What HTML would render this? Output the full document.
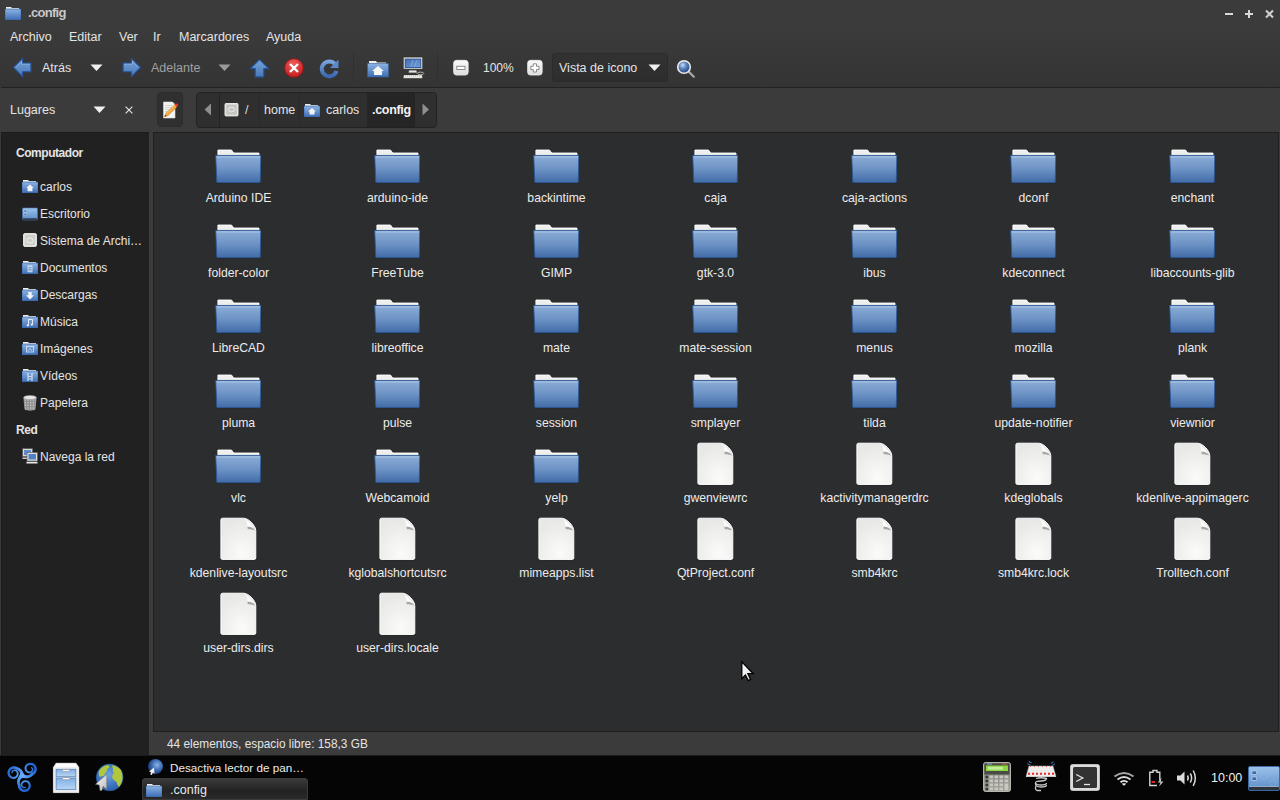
<!DOCTYPE html>
<html><head><meta charset="utf-8">
<style>
*{box-sizing:border-box}
html,body{margin:0;padding:0}
body{width:1280px;height:800px;overflow:hidden;position:relative;background:#3b3b3b;font-family:"Liberation Sans",sans-serif;font-size:12.5px;color:#e4e4e4}
.a{position:absolute;white-space:nowrap}
.t{position:absolute;white-space:nowrap;line-height:16px;margin-top:1px}
.ic{position:absolute;overflow:visible}
.lbl{position:absolute;width:160px;text-align:center;line-height:16px;color:#ececec;white-space:nowrap;font-size:12.2px}
#side{position:absolute;left:1px;top:132px;width:148px;height:623px;background:#212121;border-top:1px solid #1b1b1b;border-left:1px solid #1b1b1b}
#view{position:absolute;left:153px;top:132px;width:1126px;height:600px;background:#2c2d2f;border:1px solid #1f1f1f}
#task{position:absolute;left:0;top:755px;width:1280px;height:45px;background:#050505;border-top:1px solid #1d1d1d}
.hdr{font-weight:bold;letter-spacing:-0.45px;font-size:12px}
.sep{position:absolute;width:1px;background:#303030}
</style></head><body>
<svg width="0" height="0" style="position:absolute">
<defs>
<linearGradient id="fg" x1="0" y1="0" x2="0" y2="1">
<stop offset="0" stop-color="#8cadd7"/><stop offset="0.5" stop-color="#6d93c5"/><stop offset="1" stop-color="#426ca8"/>
</linearGradient>
<radialGradient id="pg" cx="0.6" cy="0.85" r="0.8">
<stop offset="0" stop-color="#fbfbfa"/><stop offset="1" stop-color="#e8e9e7"/>
</radialGradient>
<symbol id="fold" viewBox="0 0 50 40">
<path d="M6.9 5H20.5L22.75 8H48V11H6.9z" fill="none" stroke="#151515" stroke-opacity="0.55" stroke-width="1.6"/>
<path d="M6.9 5H20.5L22.75 8H48V11H6.9z" fill="#eeeeec" stroke="#ffffff" stroke-width="0.9"/>
<path d="M4.3 10.6H50.2L49.4 38.5H5.5z" fill="#161616" opacity="0.4"/>
<path d="M4.7 10.45H49.9L49.2 37.1Q49.2 37.6 48.7 37.6H6.3Q5.8 37.6 5.8 37.1Z" fill="url(#fg)" stroke="#2c5998" stroke-width="0.9"/>
<path d="M5.7 12H48.9" stroke="#c4d6ec" stroke-width="0.9" opacity="0.7"/>
</symbol>
<symbol id="file" viewBox="0 0 40 46">
<path d="M2.9 4.7Q2.9 3.2 4.4 3.2H25.7C30.5 3.2 37.8 10.5 37.8 15.7V43Q37.8 44.4 36.4 44.4H4.3Q2.9 44.4 2.9 43Z" fill="none" stroke="#151617" stroke-opacity="0.6" stroke-width="1.6"/>
<path d="M2.9 4.7Q2.9 3.2 4.4 3.2H25.7C30.5 3.2 37.8 10.5 37.8 15.7V43Q37.8 44.4 36.4 44.4H4.3Q2.9 44.4 2.9 43Z" fill="url(#pg)" stroke="#ffffff" stroke-width="1"/>
<path d="M29.3 11.6C33 11.6 35.5 13.2 37.3 15.6C35 14.6 32 14 29.8 14.2Z" fill="#8e8e8e" opacity="0.75"/>
<path d="M26 3.7C28.5 4.5 29.6 8 29.3 11.6C31.5 11.2 34 12 35.5 13C33 9 29.5 5 26 3.7Z" fill="#fdfdfd"/>
</symbol>
<linearGradient id="arr" x1="0" y1="0" x2="0" y2="1"><stop offset="0" stop-color="#78a3d8"/><stop offset="1" stop-color="#4677b8"/></linearGradient>
<linearGradient id="bl" x1="0" y1="0" x2="0" y2="1"><stop offset="0" stop-color="#8db3e2"/><stop offset="1" stop-color="#3d6eb5"/></linearGradient>
<symbol id="sfold" viewBox="0 0 16 14">
<path d="M1 1h5l1 1h7v3H1z" fill="#eee"/>
<path d="M0 3h16v11H0z" fill="url(#bl)" stroke="#34609e" stroke-width="0.6"/>
</symbol>
</defs></svg>

<div class="a" style="left:0;top:0;width:1280px;height:87px;background:linear-gradient(#3b3b3b 0px,#3b3b3b 28px,#343434 87px)"></div>
<!-- title bar -->
<svg class="ic" style="left:5px;top:6px" width="16" height="14"><use href="#sfold"/></svg>
<div class="t" style="left:28px;top:4px;color:#c8c8c8;font-size:13px;font-weight:bold;letter-spacing:-0.7px">.config</div>
<svg class="ic" style="left:1224px;top:10px" width="52" height="10">
<path d="M1 4h8" stroke="#d8d8d8" stroke-width="2"/>
<path d="M21 4h8M25 0v8" stroke="#d8d8d8" stroke-width="2"/>
<path d="M42 0.5l7 7M49 0.5l-7 7" stroke="#d0d0d0" stroke-width="2"/>
</svg>

<!-- menubar -->
<div class="t" style="left:10px;top:28px">Archivo</div>
<div class="t" style="left:69px;top:28px">Editar</div>
<div class="t" style="left:119px;top:28px">Ver</div>
<div class="t" style="left:153px;top:28px">Ir</div>
<div class="t" style="left:179px;top:28px">Marcardores</div>
<div class="t" style="left:266px;top:28px">Ayuda</div>

<!-- toolbar -->
<svg class="ic" style="left:13px;top:58px" width="20" height="20">
<path d="M0.6 9.5L9.6 0.6V5.1H17.9V13.8H9.6V18.6Z" fill="url(#arr)" stroke="#24549e" stroke-width="1.1" stroke-linejoin="miter"/><path d="M2.3 9.5L8.6 3.2V6.1H16.9" fill="none" stroke="#a8c6ec" stroke-width="0.7" opacity="0.7"/></svg>
<div class="t" style="left:42px;top:59px">Atrás</div>
<svg class="ic" style="left:90px;top:64px" width="14" height="8"><path d="M0.5 0.5h12l-6 6.5z" fill="#f0f0f0"/></svg>
<svg class="ic" style="left:121px;top:58px" width="20" height="20">
<path d="M19.4 9.5L10.4 0.6V5.1H2.1V13.8H10.4V18.6Z" fill="url(#arr)" stroke="#24549e" stroke-width="1.1" stroke-linejoin="miter"/><path d="M17.7 9.5L11.4 3.2V6.1H3.1" fill="none" stroke="#a8c6ec" stroke-width="0.7" opacity="0.7"/></svg>
<div class="t" style="left:151px;top:59px;color:#a0a0a0">Adelante</div>
<svg class="ic" style="left:218px;top:64px" width="14" height="8"><path d="M0.5 0.5h12l-6 6.5z" fill="#9a9a9a"/></svg>
<svg class="ic" style="left:250px;top:59px" width="20" height="19">
<path d="M9.5 0.6L18.6 9.6H13.8V17.9H5.2V9.6H0.4Z" fill="url(#arr)" stroke="#24549e" stroke-width="1.1" stroke-linejoin="miter"/></svg>
<svg class="ic" style="left:284px;top:58px" width="20" height="20">
<defs><radialGradient id="stp" cx="0.45" cy="0.3" r="0.75"><stop offset="0" stop-color="#f06060"/><stop offset="1" stop-color="#c01818"/></radialGradient></defs><circle cx="10" cy="10" r="9.3" fill="url(#stp)" stroke="#a81010" stroke-width="0.8"/>
<path d="M6 6l8 8M14 6l-8 8" stroke="#fff" stroke-width="2.3"/></svg>
<svg class="ic" style="left:319px;top:58px" width="21" height="21">
<defs><linearGradient id="rl" x1="0" y1="0" x2="0" y2="1"><stop offset="0" stop-color="#78a4dc"/><stop offset="1" stop-color="#3a68b2"/></linearGradient></defs><path d="M16 6A7.5 7.5 0 1 0 17.5 13" fill="none" stroke="url(#rl)" stroke-width="4"/>
<path d="M19.5 1.5v8.5h-8.5z" fill="#5a88c8"/></svg>
<div class="sep" style="left:353px;top:53px;height:29px"></div>
<svg class="ic" style="left:367px;top:59px" width="22" height="19">
<path d="M2 2h7l1 1.5h9v3H2z" fill="#eee"/>
<path d="M0.5 4.5h21v13.5H0.5z" fill="url(#bl)" stroke="#34609e" stroke-width="0.6"/>
<path d="M11 7l-6 5h2v4h8v-4h2z" fill="#f4f4f4"/></svg>
<svg class="ic" style="left:403px;top:56px" width="23" height="24">
<defs><linearGradient id="scr" x1="0" y1="0" x2="1" y2="1"><stop offset="0" stop-color="#3f6cb6"/><stop offset="1" stop-color="#73a0d6"/></linearGradient></defs>
<rect x="0.4" y="1.1" width="19.2" height="12" fill="#dcdcd4" stroke="#1e1e1e" stroke-opacity="0.5" stroke-width="0.8"/>
<rect x="2.2" y="3.1" width="15.6" height="8.5" fill="url(#scr)" stroke="#1f4a98" stroke-width="0.8"/>
<path d="M8 10.5L10 4M11.5 10.5L14 4" stroke="#a8c4e8" stroke-width="1" opacity="0.5"/>
<path d="M6 14.2H13.5L14 16.8H5.5Z" fill="#e4e4e0" stroke="#222" stroke-opacity="0.4" stroke-width="0.5"/>
<ellipse cx="17.5" cy="17.4" rx="3.3" ry="1.3" fill="none" stroke="#b8b8b0" stroke-width="1"/>
<path d="M0.8 19H19L19.5 22.2H0.4Z" fill="#f0f0ec" stroke="#222" stroke-opacity="0.4" stroke-width="0.5"/>
<path d="M2 20H18" stroke="#999" stroke-width="0.7" stroke-dasharray="1 1"/>
</svg>
<div class="sep" style="left:437px;top:53px;height:29px"></div>
<svg class="ic" style="left:453px;top:60px" width="16" height="16">
<defs><linearGradient id="zb" x1="0" y1="0" x2="0" y2="1"><stop offset="0" stop-color="#fafafa"/><stop offset="1" stop-color="#dcdcdc"/></linearGradient></defs>
<rect x="0.6" y="0.3" width="14.6" height="14.8" rx="3" fill="url(#zb)" stroke="#f4f4f4" stroke-width="0.7"/>
<rect x="3.8" y="6.3" width="8.2" height="3.2" fill="#fff" stroke="#808080" stroke-width="0.9"/></svg>
<div class="t" style="left:483px;top:59px;font-size:12px">100%</div>
<svg class="ic" style="left:527px;top:60px" width="16" height="16">
<rect x="0.6" y="0.3" width="14.6" height="14.8" rx="3" fill="url(#zb)" stroke="#f4f4f4" stroke-width="0.7"/>
<path d="M6.3 3.8H9.5V6.3H12V9.5H9.5V12H6.3V9.5H3.8V6.3H6.3Z" fill="#fff" stroke="#808080" stroke-width="0.9"/></svg>
<div class="a" style="left:552px;top:53px;width:116px;height:29px;background:linear-gradient(#323232,#2d2d2d);border:1px solid #2b2b2b;border-radius:3px"></div>
<div class="t" style="left:559px;top:59px">Vista de icono</div>
<svg class="ic" style="left:648px;top:64px" width="14" height="8"><path d="M0.5 0.5h12l-6 6.5z" fill="#f0f0f0"/></svg>
<svg class="ic" style="left:676px;top:59px" width="20" height="20">
<defs><radialGradient id="lens" cx="0.4" cy="0.35" r="0.65"><stop offset="0" stop-color="#c8dcf4"/><stop offset="0.45" stop-color="#5a84c0"/><stop offset="1" stop-color="#23427a"/></radialGradient></defs>
<path d="M12.8 12.8L17.8 17.8" stroke="#a8a8a8" stroke-width="2.2" stroke-linecap="round"/>
<circle cx="8" cy="8" r="6.3" fill="url(#lens)" stroke="#ececec" stroke-width="1.6"/></svg>

<div class="a" style="left:1px;top:87px;width:1279px;height:1px;background:#222"></div>

<!-- location bar -->
<div class="t" style="left:10px;top:101px">Lugares</div>
<svg class="ic" style="left:93px;top:106px" width="14" height="8"><path d="M0.5 0.5h12l-6 6.5z" fill="#f0f0f0"/></svg>
<svg class="ic" style="left:125px;top:106px" width="8" height="8"><path d="M0.6 0.6l6.8 6.8M7.4 0.6l-6.8 6.8" stroke="#e8e8e8" stroke-width="1.1"/></svg>
<div class="a" style="left:157px;top:92px;width:26px;height:35px;background:#303030;border:1px solid #2c2c2c;border-radius:4px"></div>
<svg class="ic" style="left:162px;top:101px" width="18" height="18">
<path d="M1.5 1H10.5L13 3.5V17H1.5Z" fill="#f4f4f4" stroke="#dcdcdc" stroke-width="0.6"/>
<path d="M3 4.5H10M3 6.5H10M3 8.5H9M3 10.5H8" stroke="#c4c4c4" stroke-width="0.7"/>
<path d="M2.6 15.8L4 12.2L12.8 3.6L15 5.8L6.2 14.4Z" fill="#f4a63c" stroke="#b8701c" stroke-width="0.5"/>
<path d="M4.5 12.8L13 4.5" stroke="#ffd080" stroke-width="0.7"/>
<path d="M2.6 15.8L3.3 14L4.4 15.1Z" fill="#222"/>
<path d="M12.8 3.6L13.8 2.6Q14.8 2 15.8 3Q16.5 4 16 4.8L15 5.8Z" fill="#e83030"/>
</svg>
<div class="a" style="left:196px;top:92px;width:241px;height:36px;background:#2f2f2f;border:1px solid #222;border-radius:4px"></div>
<div class="a" style="left:219px;top:93px;width:1px;height:34px;background:#232323"></div>
<div class="a" style="left:259px;top:93px;width:1px;height:34px;background:#2a2a2a"></div>
<div class="a" style="left:299px;top:93px;width:1px;height:34px;background:#2a2a2a"></div>
<div class="a" style="left:367px;top:93px;width:47px;height:34px;background:#252525"></div>
<div class="a" style="left:414px;top:93px;width:1px;height:34px;background:#232323"></div>
<svg class="ic" style="left:204px;top:103px" width="8" height="13"><path d="M7 0.5v12L0.5 6.5z" fill="#8f8f8f"/></svg>
<svg class="ic" style="left:224px;top:102px" width="16" height="16">
<rect x="1" y="1.5" width="13" height="12.5" rx="1" fill="#d8d8d4" stroke="#f2f2f2" stroke-width="0.9"/>
<rect x="2.5" y="3" width="10" height="9.5" fill="#c4c4c0"/>
<ellipse cx="7.5" cy="7.5" rx="3.2" ry="2.3" fill="none" stroke="#eeeeea" stroke-width="0.9"/>
<path d="M1.5 14.3H14" stroke="#555" stroke-width="0.6" opacity="0.6"/></svg>
<div class="t" style="left:245px;top:101px;color:#ddd">/</div>
<div class="t" style="left:264px;top:101px">home</div>
<svg class="ic" style="left:304px;top:103px" width="16" height="14"><use href="#sfold"/>
<path d="M8 5l-4 3.5h1.5v3h5v-3H12z" fill="#f4f4f4"/></svg>
<div class="t" style="left:326px;top:101px">carlos</div>
<div class="t" style="left:372px;top:101px;font-weight:bold;letter-spacing:-0.3px;color:#f2f2f2">.config</div>
<svg class="ic" style="left:422px;top:103px" width="8" height="13"><path d="M0.5 0.5v12L7 6.5z" fill="#8f8f8f"/></svg>

<!-- sidebar -->
<div id="side"></div>
<div class="t hdr" style="left:16px;top:144px">Computador</div>
<svg class="ic" style="left:22px;top:179px" width="16" height="14"><use href="#sfold"/><path d="M8 5.5L4.2 9H5.6V12.3H10.4V9H11.8Z" fill="#f4f4f4"/></svg>
<div class="t" style="left:40px;top:178px;font-size:12px">carlos</div>
<svg class="ic" style="left:22px;top:207px" width="16" height="14">
<rect x="0.5" y="1" width="15" height="12" rx="1" fill="url(#dsk)" stroke="#4a78b4" stroke-width="0.6"/>
<rect x="2" y="3" width="2.5" height="2" fill="#3a6ab0" stroke="#dde8f5" stroke-width="0.4"/><rect x="2" y="6.5" width="2.5" height="2" fill="#3a6ab0" stroke="#dde8f5" stroke-width="0.4"/>
<rect x="0.8" y="11.3" width="14.4" height="1.6" fill="#2d3440"/></svg>
<div class="t" style="left:40px;top:205px;font-size:12px">Escritorio</div>
<svg class="ic" style="left:22px;top:232px" width="16" height="16">
<rect x="1.5" y="1.5" width="13" height="13" rx="1.5" fill="#e0e0dc" stroke="#f6f6f6" stroke-width="0.8"/>
<rect x="3" y="3" width="10" height="10" fill="#cfcfca"/>
<ellipse cx="8" cy="8.5" rx="3.5" ry="2.5" fill="none" stroke="#f2f2f2" stroke-width="0.9"/></svg>
<div class="t" style="left:40px;top:232px;font-size:12px">Sistema de Archi…</div>
<svg class="ic" style="left:22px;top:260px" width="16" height="14"><use href="#sfold"/><rect x="5.5" y="5.3" width="5" height="7" fill="#dfe8f4" opacity="0.8"/><path d="M6.3 7.8H9.7M6.3 9.9H9.7" stroke="#4a78b8" stroke-width="0.8"/></svg>
<div class="t" style="left:40px;top:259px;font-size:12px">Documentos</div>
<svg class="ic" style="left:22px;top:287px" width="16" height="14"><use href="#sfold"/><path d="M6.3 5H9.7V8.3H12L8 12.5L4 8.3H6.3Z" fill="#f0f4fa"/></svg>
<div class="t" style="left:40px;top:286px;font-size:12px">Descargas</div>
<svg class="ic" style="left:22px;top:314px" width="16" height="14"><use href="#sfold"/><path d="M6.5 11.5V5.5H10.5V10.5" fill="none" stroke="#eef3fa" stroke-width="0.9"/><circle cx="5.8" cy="11.3" r="1.1" fill="#eef3fa"/><circle cx="9.8" cy="10.6" r="1.1" fill="#eef3fa"/></svg>
<div class="t" style="left:40px;top:313px;font-size:12px">Música</div>
<svg class="ic" style="left:22px;top:341px" width="16" height="14"><use href="#sfold"/><rect x="4.5" y="5.5" width="7" height="5.5" fill="none" stroke="#dfe8f4" stroke-width="0.8"/><path d="M6 10L8 7.5L10 10" fill="none" stroke="#dfe8f4" stroke-width="0.7"/></svg>
<div class="t" style="left:40px;top:340px;font-size:12px">Imágenes</div>
<svg class="ic" style="left:22px;top:368px" width="16" height="14"><use href="#sfold"/><path d="M6 5V13M10 5V13" stroke="#eef3fa" stroke-width="1"/><path d="M6.5 8.5H9.5M6.5 11H9.5" stroke="#eef3fa" stroke-width="0.8"/></svg>
<div class="t" style="left:40px;top:367px;font-size:12px">Vídeos</div>
<svg class="ic" style="left:22px;top:394px" width="16" height="17">
<defs><pattern id="mesh" width="1.6" height="1.6" patternUnits="userSpaceOnUse"><rect width="1.6" height="1.6" fill="#8a8a8a"/><rect width="0.8" height="0.8" fill="#d8d8d8"/></pattern></defs>
<path d="M1.8 3.5H14.2L13 15.5Q8 17 3 15.5Z" fill="url(#mesh)" stroke="#bdbdbd" stroke-width="0.6"/>
<ellipse cx="8" cy="3.5" rx="6.3" ry="2" fill="#e8e8e8" stroke="#9a9a9a" stroke-width="0.6"/></svg>
<div class="t" style="left:40px;top:394px;font-size:12px">Papelera</div>
<div class="t hdr" style="left:16px;top:421px">Red</div>
<svg class="ic" style="left:22px;top:448px" width="16" height="16">
<rect x="0.6" y="0.6" width="10" height="8" fill="#d8d8d8" stroke="#555" stroke-width="0.6"/><rect x="2" y="2" width="7" height="5" fill="#5f8dc8"/>
<rect x="0.5" y="9.5" width="5" height="1.5" fill="#ccc"/>
<rect x="5" y="4.5" width="10.5" height="8.5" fill="#e0e0e0" stroke="#555" stroke-width="0.6"/><rect x="6.5" y="6" width="7.5" height="5.5" fill="#4f80c4"/>
<rect x="4.5" y="13.8" width="11" height="1.8" fill="#e8e8e8" stroke="#666" stroke-width="0.4"/></svg>
<div class="t" style="left:40px;top:448px;font-size:12px">Navega la red</div>

<!-- view -->
<div id="view"></div>
<svg class="ic" style="left:210.5px;top:145px" width="50" height="40"><use href="#fold"/></svg>
<div class="lbl" style="left:158.5px;top:190px">Arduino IDE</div>
<svg class="ic" style="left:369.5px;top:145px" width="50" height="40"><use href="#fold"/></svg>
<div class="lbl" style="left:317.5px;top:190px">arduino-ide</div>
<svg class="ic" style="left:528.5px;top:145px" width="50" height="40"><use href="#fold"/></svg>
<div class="lbl" style="left:476.5px;top:190px">backintime</div>
<svg class="ic" style="left:687.5px;top:145px" width="50" height="40"><use href="#fold"/></svg>
<div class="lbl" style="left:635.5px;top:190px">caja</div>
<svg class="ic" style="left:846.5px;top:145px" width="50" height="40"><use href="#fold"/></svg>
<div class="lbl" style="left:794.5px;top:190px">caja-actions</div>
<svg class="ic" style="left:1005.5px;top:145px" width="50" height="40"><use href="#fold"/></svg>
<div class="lbl" style="left:953.5px;top:190px">dconf</div>
<svg class="ic" style="left:1164.5px;top:145px" width="50" height="40"><use href="#fold"/></svg>
<div class="lbl" style="left:1112.5px;top:190px">enchant</div>
<svg class="ic" style="left:210.5px;top:220px" width="50" height="40"><use href="#fold"/></svg>
<div class="lbl" style="left:158.5px;top:265px">folder-color</div>
<svg class="ic" style="left:369.5px;top:220px" width="50" height="40"><use href="#fold"/></svg>
<div class="lbl" style="left:317.5px;top:265px">FreeTube</div>
<svg class="ic" style="left:528.5px;top:220px" width="50" height="40"><use href="#fold"/></svg>
<div class="lbl" style="left:476.5px;top:265px">GIMP</div>
<svg class="ic" style="left:687.5px;top:220px" width="50" height="40"><use href="#fold"/></svg>
<div class="lbl" style="left:635.5px;top:265px">gtk-3.0</div>
<svg class="ic" style="left:846.5px;top:220px" width="50" height="40"><use href="#fold"/></svg>
<div class="lbl" style="left:794.5px;top:265px">ibus</div>
<svg class="ic" style="left:1005.5px;top:220px" width="50" height="40"><use href="#fold"/></svg>
<div class="lbl" style="left:953.5px;top:265px">kdeconnect</div>
<svg class="ic" style="left:1164.5px;top:220px" width="50" height="40"><use href="#fold"/></svg>
<div class="lbl" style="left:1112.5px;top:265px">libaccounts-glib</div>
<svg class="ic" style="left:210.5px;top:295px" width="50" height="40"><use href="#fold"/></svg>
<div class="lbl" style="left:158.5px;top:340px">LibreCAD</div>
<svg class="ic" style="left:369.5px;top:295px" width="50" height="40"><use href="#fold"/></svg>
<div class="lbl" style="left:317.5px;top:340px">libreoffice</div>
<svg class="ic" style="left:528.5px;top:295px" width="50" height="40"><use href="#fold"/></svg>
<div class="lbl" style="left:476.5px;top:340px">mate</div>
<svg class="ic" style="left:687.5px;top:295px" width="50" height="40"><use href="#fold"/></svg>
<div class="lbl" style="left:635.5px;top:340px">mate-session</div>
<svg class="ic" style="left:846.5px;top:295px" width="50" height="40"><use href="#fold"/></svg>
<div class="lbl" style="left:794.5px;top:340px">menus</div>
<svg class="ic" style="left:1005.5px;top:295px" width="50" height="40"><use href="#fold"/></svg>
<div class="lbl" style="left:953.5px;top:340px">mozilla</div>
<svg class="ic" style="left:1164.5px;top:295px" width="50" height="40"><use href="#fold"/></svg>
<div class="lbl" style="left:1112.5px;top:340px">plank</div>
<svg class="ic" style="left:210.5px;top:370px" width="50" height="40"><use href="#fold"/></svg>
<div class="lbl" style="left:158.5px;top:415px">pluma</div>
<svg class="ic" style="left:369.5px;top:370px" width="50" height="40"><use href="#fold"/></svg>
<div class="lbl" style="left:317.5px;top:415px">pulse</div>
<svg class="ic" style="left:528.5px;top:370px" width="50" height="40"><use href="#fold"/></svg>
<div class="lbl" style="left:476.5px;top:415px">session</div>
<svg class="ic" style="left:687.5px;top:370px" width="50" height="40"><use href="#fold"/></svg>
<div class="lbl" style="left:635.5px;top:415px">smplayer</div>
<svg class="ic" style="left:846.5px;top:370px" width="50" height="40"><use href="#fold"/></svg>
<div class="lbl" style="left:794.5px;top:415px">tilda</div>
<svg class="ic" style="left:1005.5px;top:370px" width="50" height="40"><use href="#fold"/></svg>
<div class="lbl" style="left:953.5px;top:415px">update-notifier</div>
<svg class="ic" style="left:1164.5px;top:370px" width="50" height="40"><use href="#fold"/></svg>
<div class="lbl" style="left:1112.5px;top:415px">viewnior</div>
<svg class="ic" style="left:210.5px;top:445px" width="50" height="40"><use href="#fold"/></svg>
<div class="lbl" style="left:158.5px;top:490px">vlc</div>
<svg class="ic" style="left:369.5px;top:445px" width="50" height="40"><use href="#fold"/></svg>
<div class="lbl" style="left:317.5px;top:490px">Webcamoid</div>
<svg class="ic" style="left:528.5px;top:445px" width="50" height="40"><use href="#fold"/></svg>
<div class="lbl" style="left:476.5px;top:490px">yelp</div>
<svg class="ic" style="left:694.5px;top:440px" width="40" height="46"><use href="#file"/></svg>
<div class="lbl" style="left:635.5px;top:490px">gwenviewrc</div>
<svg class="ic" style="left:853.5px;top:440px" width="40" height="46"><use href="#file"/></svg>
<div class="lbl" style="left:794.5px;top:490px">kactivitymanagerdrc</div>
<svg class="ic" style="left:1012.5px;top:440px" width="40" height="46"><use href="#file"/></svg>
<div class="lbl" style="left:953.5px;top:490px">kdeglobals</div>
<svg class="ic" style="left:1171.5px;top:440px" width="40" height="46"><use href="#file"/></svg>
<div class="lbl" style="left:1112.5px;top:490px">kdenlive-appimagerc</div>
<svg class="ic" style="left:217.5px;top:515px" width="40" height="46"><use href="#file"/></svg>
<div class="lbl" style="left:158.5px;top:565px">kdenlive-layoutsrc</div>
<svg class="ic" style="left:376.5px;top:515px" width="40" height="46"><use href="#file"/></svg>
<div class="lbl" style="left:317.5px;top:565px">kglobalshortcutsrc</div>
<svg class="ic" style="left:535.5px;top:515px" width="40" height="46"><use href="#file"/></svg>
<div class="lbl" style="left:476.5px;top:565px">mimeapps.list</div>
<svg class="ic" style="left:694.5px;top:515px" width="40" height="46"><use href="#file"/></svg>
<div class="lbl" style="left:635.5px;top:565px">QtProject.conf</div>
<svg class="ic" style="left:853.5px;top:515px" width="40" height="46"><use href="#file"/></svg>
<div class="lbl" style="left:794.5px;top:565px">smb4krc</div>
<svg class="ic" style="left:1012.5px;top:515px" width="40" height="46"><use href="#file"/></svg>
<div class="lbl" style="left:953.5px;top:565px">smb4krc.lock</div>
<svg class="ic" style="left:1171.5px;top:515px" width="40" height="46"><use href="#file"/></svg>
<div class="lbl" style="left:1112.5px;top:565px">Trolltech.conf</div>
<svg class="ic" style="left:217.5px;top:590px" width="40" height="46"><use href="#file"/></svg>
<div class="lbl" style="left:158.5px;top:640px">user-dirs.dirs</div>
<svg class="ic" style="left:376.5px;top:590px" width="40" height="46"><use href="#file"/></svg>
<div class="lbl" style="left:317.5px;top:640px">user-dirs.locale</div>

<!-- status -->
<div class="t" style="left:167px;top:735px;font-size:11.85px">44 elementos, espacio libre: 158,3 GB</div>

<!-- taskbar -->
<div id="task"></div>
<svg class="ic" style="left:4px;top:758px" width="36" height="38"><defs><radialGradient id="trg" gradientUnits="userSpaceOnUse" cx="18" cy="17.5" r="16"><stop offset="0" stop-color="#6db0ff"/><stop offset="1" stop-color="#1d62d0"/></radialGradient></defs><g fill="url(#trg)"><path d="M19.85 17.49 L19.62 15.77 L19.11 14.19 L18.36 12.79 L17.42 11.61 L16.37 10.63 L15.23 9.88 L14.26 9.46 L13.43 9.10 L12.41 8.63 L11.33 8.33 L10.22 8.21 L9.12 8.27 L8.05 8.51 L7.04 8.92 L6.11 9.48 L5.30 10.18 L4.61 11.00 L4.07 11.92 L3.68 12.90 L3.46 13.93 L3.41 14.97 L3.54 16.00 L3.82 16.99 L4.26 17.91 L4.84 18.74 L5.54 19.47 L6.34 20.07 L7.23 20.52 L8.17 20.83 L9.14 20.97 L10.11 20.96 L11.16 20.75 L12.05 20.33 L12.82 19.77 L13.46 19.11 L13.98 18.37 L14.35 17.57 L14.58 16.74 L14.67 15.91 L14.61 15.10 L14.43 14.33 L14.12 13.62 L13.71 12.99 L13.22 12.46 L12.65 12.03 L12.05 11.71 L11.41 11.51 L10.79 11.43 L10.18 11.44 L9.59 11.55 L9.05 11.76 L8.57 12.04 L8.16 12.39 L7.83 12.80 L7.59 13.24 L7.43 13.70 L7.37 14.16 L7.38 14.60 L7.48 15.02 L7.59 15.29 L8.81 14.85 L8.73 14.57 L8.72 14.38 L8.75 14.18 L8.81 13.97 L8.92 13.77 L9.08 13.57 L9.27 13.39 L9.51 13.23 L9.78 13.12 L10.08 13.04 L10.41 13.02 L10.76 13.05 L11.13 13.14 L11.48 13.29 L11.81 13.51 L12.12 13.80 L12.38 14.14 L12.59 14.54 L12.74 14.99 L12.81 15.47 L12.80 15.98 L12.71 16.49 L12.52 17.00 L12.24 17.49 L11.88 17.94 L11.43 18.33 L10.91 18.65 L10.34 18.87 L9.80 18.90 L9.17 18.86 L8.54 18.73 L7.95 18.48 L7.40 18.15 L6.91 17.73 L6.49 17.23 L6.16 16.67 L5.92 16.06 L5.79 15.42 L5.76 14.76 L5.83 14.10 L6.02 13.47 L6.30 12.86 L6.69 12.31 L7.15 11.83 L7.70 11.43 L8.30 11.12 L8.94 10.92 L9.62 10.82 L10.30 10.83 L10.98 10.95 L11.62 11.18 L12.23 11.52 L13.13 11.94 L14.09 12.39 L14.78 12.91 L15.39 13.62 L15.85 14.50 L16.16 15.49 L16.30 16.57 L16.25 17.71Z"/><path d="M17.31 19.24 L19.28 20.00 L21.24 20.35 L23.13 20.32 L24.86 19.94 L26.42 19.32 L27.76 18.47 L28.58 17.69 L29.17 17.16 L30.12 16.56 L30.96 15.82 L31.66 14.96 L32.21 14.00 L32.59 12.98 L32.80 11.91 L32.84 10.82 L32.69 9.76 L32.38 8.73 L31.91 7.78 L31.30 6.92 L30.56 6.18 L29.71 5.57 L28.78 5.11 L27.80 4.80 L26.79 4.67 L25.77 4.70 L24.78 4.89 L23.84 5.24 L22.98 5.73 L22.21 6.35 L21.56 7.09 L21.04 7.91 L20.64 8.90 L20.51 9.88 L20.56 10.82 L20.76 11.73 L21.10 12.56 L21.56 13.31 L22.13 13.95 L22.78 14.48 L23.49 14.88 L24.24 15.14 L25.00 15.27 L25.75 15.27 L26.47 15.15 L27.13 14.91 L27.73 14.57 L28.24 14.15 L28.65 13.68 L28.97 13.16 L29.20 12.61 L29.33 12.05 L29.35 11.49 L29.28 10.95 L29.12 10.45 L28.88 10.01 L28.58 9.63 L28.23 9.32 L27.85 9.09 L27.45 8.94 L27.16 8.89 L26.87 10.16 L27.15 10.23 L27.31 10.33 L27.46 10.46 L27.60 10.63 L27.71 10.84 L27.80 11.08 L27.84 11.34 L27.84 11.62 L27.79 11.91 L27.69 12.21 L27.52 12.49 L27.31 12.77 L27.03 13.03 L26.71 13.24 L26.35 13.40 L25.94 13.50 L25.51 13.53 L25.06 13.49 L24.61 13.37 L24.16 13.17 L23.74 12.88 L23.36 12.52 L23.04 12.09 L22.78 11.59 L22.61 11.04 L22.52 10.45 L22.53 9.83 L22.66 9.24 L22.93 8.77 L23.31 8.26 L23.76 7.81 L24.29 7.45 L24.87 7.17 L25.49 6.99 L26.14 6.91 L26.79 6.94 L27.43 7.07 L28.04 7.31 L28.61 7.64 L29.12 8.07 L29.55 8.57 L29.90 9.14 L30.15 9.76 L30.30 10.41 L30.34 11.08 L30.27 11.76 L30.09 12.41 L29.80 13.03 L29.42 13.60 L28.95 14.10 L28.40 14.51 L27.79 14.84 L26.84 15.58 L25.88 16.45 L24.99 16.94 L23.91 17.25 L22.69 17.31 L21.40 17.12 L20.08 16.68 L18.79 15.96Z"/><path d="M16.88 16.23 L15.41 17.66 L14.28 19.24 L13.53 20.91 L13.13 22.60 L13.02 24.23 L13.21 25.78 L13.55 26.84 L13.77 27.61 L13.92 28.72 L14.25 29.79 L14.74 30.79 L15.39 31.68 L16.17 32.46 L17.05 33.09 L18.02 33.57 L19.05 33.89 L20.11 34.03 L21.18 33.99 L22.21 33.79 L23.20 33.42 L24.10 32.90 L24.91 32.25 L25.59 31.48 L26.13 30.61 L26.52 29.68 L26.76 28.70 L26.83 27.70 L26.74 26.71 L26.49 25.75 L26.09 24.85 L25.56 24.04 L24.82 23.26 L23.98 22.74 L23.10 22.39 L22.20 22.20 L21.30 22.17 L20.42 22.28 L19.60 22.53 L18.86 22.90 L18.20 23.39 L17.65 23.96 L17.22 24.60 L16.90 25.28 L16.72 25.98 L16.66 26.69 L16.72 27.37 L16.89 28.01 L17.15 28.58 L17.49 29.09 L17.90 29.53 L18.36 29.87 L18.86 30.12 L19.38 30.28 L19.90 30.34 L20.40 30.31 L20.87 30.20 L21.30 30.01 L21.66 29.75 L21.97 29.45 L22.13 29.21 L21.10 28.42 L20.91 28.64 L20.76 28.74 L20.57 28.83 L20.36 28.88 L20.13 28.90 L19.88 28.88 L19.62 28.81 L19.37 28.70 L19.12 28.53 L18.90 28.31 L18.70 28.05 L18.54 27.74 L18.42 27.38 L18.36 27.00 L18.36 26.60 L18.44 26.19 L18.59 25.78 L18.81 25.39 L19.11 25.03 L19.48 24.71 L19.91 24.44 L20.40 24.25 L20.93 24.13 L21.49 24.10 L22.06 24.17 L22.63 24.34 L23.19 24.60 L23.68 24.97 L23.99 25.40 L24.30 25.96 L24.52 26.56 L24.63 27.19 L24.65 27.83 L24.55 28.47 L24.36 29.09 L24.06 29.68 L23.68 30.20 L23.21 30.66 L22.67 31.04 L22.07 31.33 L21.44 31.51 L20.77 31.60 L20.11 31.57 L19.45 31.43 L18.82 31.19 L18.24 30.85 L17.72 30.41 L17.27 29.90 L16.91 29.32 L16.65 28.68 L16.50 28.01 L16.46 27.32 L16.20 26.18 L15.84 24.97 L15.79 23.98 L15.97 22.90 L16.43 21.81 L17.13 20.76 L18.06 19.80 L19.22 18.97Z"/><circle cx="18.05" cy="17.6" r="2.6"/></g></svg>
<svg class="ic" style="left:48px;top:758px" width="36" height="38">
<defs><linearGradient id="dr" x1="0" y1="0" x2="0" y2="1"><stop offset="0" stop-color="#7fb0e6"/><stop offset="1" stop-color="#b9d5f2"/></linearGradient>
<linearGradient id="lid" x1="0" y1="0" x2="0" y2="1"><stop offset="0" stop-color="#ffffff"/><stop offset="1" stop-color="#d8d8d8"/></linearGradient></defs>
<path d="M8 5H28L31 9.2V34.7H5.3V9.2Z" fill="url(#lid)" stroke="#9a9a9a" stroke-width="0.5"/>
<path d="M5.3 9.2H31V34.7H5.3Z" fill="#ececec"/>
<rect x="8.1" y="11.25" width="19.7" height="7.5" fill="url(#dr)" stroke="#4a7cb8" stroke-width="0.7"/>
<rect x="8.1" y="20" width="19.7" height="11.6" fill="url(#dr)" stroke="#4a7cb8" stroke-width="0.7"/>
<rect x="14.4" y="11.4" width="7.5" height="2" rx="0.8" fill="#fff" stroke="#777" stroke-width="0.5"/>
<rect x="14.4" y="19.7" width="7.5" height="2" rx="0.8" fill="#fff" stroke="#777" stroke-width="0.5"/>
</svg>
<svg class="ic" style="left:92px;top:760px" width="36" height="36">
<defs><radialGradient id="gl" cx="0.45" cy="0.4" r="0.6"><stop offset="0" stop-color="#6fa3e0"/><stop offset="0.7" stop-color="#3b73bf"/><stop offset="1" stop-color="#2f62ad"/></radialGradient>
<linearGradient id="cur" x1="0" y1="0" x2="1" y2="1"><stop offset="0" stop-color="#ffffff"/><stop offset="1" stop-color="#b8b8b8"/></linearGradient></defs>
<circle cx="17.7" cy="17.4" r="13.4" fill="url(#gl)" stroke="#2a5a9e" stroke-width="0.6"/>
<path d="M20 5.5Q25 5.5 29 10Q31 14 30.5 19Q29.5 24 27 27Q25 25 24.5 22Q22 20 20.5 18.5Q19.5 15 22 13Q20 11 21 8.5Q20 7 20 5.5Z" fill="#b2c83c"/>
<path d="M7 11Q10 6 16 5Q18 6 17 8Q14 9 15 11Q12 13 12 16Q10 15 8.5 17Q6 16 7 11Z" fill="#b2c83c"/>
<path d="M14.75 14.25L3.5 24.25L7.3 25L8 30.5Q9 31 10 30.3L11 26.3L14.75 29.25Z" fill="url(#cur)" stroke="#6a6a6a" stroke-width="0.5"/>
</svg>

<svg class="ic" style="left:146px;top:758px" width="18" height="18">
<defs><radialGradient id="sg" cx="0.6" cy="0.4" r="0.6"><stop offset="0" stop-color="#8ab4e8"/><stop offset="0.6" stop-color="#3a68b0"/><stop offset="1" stop-color="#1c3c7a"/></radialGradient></defs>
<circle cx="9.5" cy="8.5" r="7.5" fill="url(#sg)"/>
<path d="M8 9.5L3 13.5L5 14L4.3 16.5L5.8 17L7 14.5L8.5 16Z" fill="#f2f2f2"/></svg>
<div class="t" style="left:170px;top:759px;color:#ececec;font-size:11.7px">Desactiva lector de pan…</div>
<div class="a" style="left:142px;top:778px;width:166px;height:22px;border-radius:3px 3px 0 0;background:linear-gradient(#3a3a3a,#222 60%,#2a2a2a);border:1px solid #3a3a3a"></div>
<svg class="ic" style="left:146px;top:783px" width="16" height="14"><use href="#sfold"/></svg>
<div class="t" style="left:170px;top:781px;color:#ececec">.config</div>

<svg class="ic" style="left:983px;top:762px" width="28" height="30">
<defs><linearGradient id="calc" x1="0" y1="0" x2="0" y2="1"><stop offset="0" stop-color="#7c7c76"/><stop offset="1" stop-color="#a4a49c"/></linearGradient></defs>
<rect x="0.5" y="0.5" width="27" height="29" rx="2" fill="url(#calc)" stroke="#cfcfc8" stroke-width="0.8"/>
<rect x="1.5" y="1.5" width="25" height="11" fill="#4a4a46"/>
<rect x="3" y="3.5" width="22" height="5.5" fill="#8cd83c"/><rect x="5" y="4.8" width="15" height="2.8" fill="#c4eaa0"/>
<rect x="4" y="1.6" width="5" height="0.9" fill="#8ab0e0"/><rect x="19" y="1.6" width="5" height="0.9" fill="#c08040"/>
<g fill="#3a3a38"><circle cx="3.8" cy="15" r="1.6"/><circle cx="3.8" cy="19" r="1.6"/><circle cx="3.8" cy="23" r="1.6"/><circle cx="3.8" cy="27" r="1.6"/></g>
<g fill="#c8c8c0"><rect x="6.5" y="13.5" width="3.5" height="2.7"/><rect x="11.5" y="13.5" width="3.5" height="2.7"/><rect x="16.5" y="13.5" width="3.5" height="2.7"/><rect x="21.5" y="13.5" width="3.8" height="2.7"/>
<rect x="6.5" y="17.5" width="3.5" height="2.7"/><rect x="11.5" y="17.5" width="3.5" height="2.7"/><rect x="16.5" y="17.5" width="3.5" height="2.7"/><rect x="21.5" y="17.5" width="3.8" height="2.7"/>
<rect x="6.5" y="21.5" width="3.5" height="2.7"/><rect x="11.5" y="21.5" width="3.5" height="2.7"/><rect x="16.5" y="21.5" width="3.5" height="2.7"/><rect x="21.5" y="21.5" width="3.8" height="6.7"/>
<rect x="6.5" y="25.5" width="3.5" height="2.7"/><rect x="11.5" y="25.5" width="3.5" height="2.7"/><rect x="16.5" y="25.5" width="3.5" height="2.7"/></g>
</svg>
<svg class="ic" style="left:1025px;top:761px" width="32" height="31">
<path d="M1 15.5L4 5H28L31 15.5Z" fill="#ececec" stroke="#aaa" stroke-width="0.5"/>
<rect x="1" y="15" width="30" height="0.8" fill="#ddd"/>
<path d="M3 12.8H29.5" stroke="#e82828" stroke-width="2" stroke-dasharray="2 2"/>
<path d="M5 5.5H27" stroke="#e85050" stroke-width="0.8" stroke-dasharray="1 3"/>
<g fill="none" stroke="#c8c8c8" stroke-width="1.3"><path d="M11 17.5Q16 16 21.5 17.5Q21 20 16 20Q10 20 10.5 22Q11 24 16 24Q21.5 24 21.5 22"/><path d="M10.5 22Q10 26 16 26Q21.5 26 21.5 24"/><path d="M11 25Q9.5 28 12 29.5H16"/></g>
<path d="M3.5 0.5Q2 2 3.5 3.5M6 0.5Q4.5 2 6 3.5" fill="none" stroke="#4a84cc" stroke-width="0.9" transform="rotate(-60 4.5 2)"/>
<path d="M26.5 0.5Q28 2 26.5 3.5M29 0.5Q30.5 2 29 3.5" fill="none" stroke="#4a84cc" stroke-width="0.9" transform="rotate(60 27.5 2)"/>
</svg>
<svg class="ic" style="left:1070px;top:764px" width="30" height="27">
<rect x="0.5" y="0.5" width="29" height="26" rx="2" fill="#dcdcdc" stroke="#f0f0f0" stroke-width="0.6"/>
<rect x="3" y="3" width="24" height="21" rx="1.5" fill="#333"/>
<path d="M6.2 10.5L12.8 14L6.2 17.5" fill="none" stroke="#e8e8e8" stroke-width="1.3"/><path d="M14 20.5h6" stroke="#e8e8e8" stroke-width="1.3"/></svg>
<svg class="ic" style="left:1113px;top:771px" width="22" height="15">
<path d="M1.5 5.5Q11 -1.5 20.5 5.5" fill="none" stroke="#a8a8a8" stroke-width="1.8"/>
<path d="M4.5 8.5Q11 3.5 17.5 8.5" fill="none" stroke="#d8d8d8" stroke-width="1.8"/>
<path d="M7.5 11.3Q11 8.5 14.5 11.3" fill="none" stroke="#e8e8e8" stroke-width="1.8"/>
<path d="M9.5 12.5L11 14L12.5 12.5" fill="#f0f0f0" stroke="#f0f0f0" stroke-width="1.2"/></svg>
<svg class="ic" style="left:1148px;top:769px" width="17" height="18">
<path d="M9 16.5H1.8V3.2H5V1.5H9V3.2H11.8V11" fill="none" stroke="#d4d4d4" stroke-width="1.4"/>
<rect x="3.5" y="12" width="3.5" height="2" fill="#e02020"/>
<path d="M13.5 8.5L9.8 13.5H12.5L11 17.5L15.5 12.5H12.8Z" fill="#c8c8c8"/></svg>
<svg class="ic" style="left:1176px;top:769px" width="22" height="19">
<path d="M1 6.5H4.5L8.5 2.5V15.5L4.5 11.5H1Z" fill="#dcdcdc"/>
<path d="M11.5 6.5Q13 9 11.5 11.5M14.3 4.5Q17 9 14.3 13.5M17.2 1.5Q21.5 9 17.2 16.8" fill="none" stroke="#dcdcdc" stroke-width="1.5"/></svg>
<div class="t" style="left:1211px;top:769px;color:#f0f0f0">10:00</div>
<svg class="ic" style="left:1248px;top:766px" width="32" height="25">
<defs><linearGradient id="dsk" x1="0" y1="0" x2="0" y2="1"><stop offset="0" stop-color="#9cc2ea"/><stop offset="1" stop-color="#5a8bc8"/></linearGradient></defs>
<rect x="0.5" y="0.5" width="31" height="24" rx="1.5" fill="url(#dsk)" stroke="#3f6fae" stroke-width="0.8"/>
<circle cx="16" cy="10" r="3.5" fill="none" stroke="#b8d2ee" stroke-width="0.6" opacity="0.3"/>
<circle cx="25" cy="17" r="3" fill="none" stroke="#b8d2ee" stroke-width="0.6" opacity="0.3"/>
<rect x="4" y="5" width="4.5" height="3.3" fill="#3a6ab0" stroke="#dde8f5" stroke-width="0.5"/>
<rect x="4" y="11" width="4.5" height="3.3" fill="#3a6ab0" stroke="#dde8f5" stroke-width="0.5"/>
<rect x="1" y="20.5" width="30" height="3.5" fill="#2d3440"/>
<rect x="1" y="20.3" width="30" height="0.6" fill="#c8d8ea"/>
</svg>

<!-- cursor -->
<svg class="ic" style="left:741px;top:661px" width="14" height="21">
<defs><linearGradient id="cg" x1="0" y1="0" x2="1" y2="1"><stop offset="0" stop-color="#ffffff"/><stop offset="1" stop-color="#d8d8d8"/></linearGradient></defs>
<path d="M0.8 0.8V17.6L4.4 14L7.2 19.6L9.6 18.5L6.9 12.7H12.3Z" fill="url(#cg)" stroke="#000" stroke-width="1.3" stroke-linejoin="miter"/>
</svg>
</body></html>
